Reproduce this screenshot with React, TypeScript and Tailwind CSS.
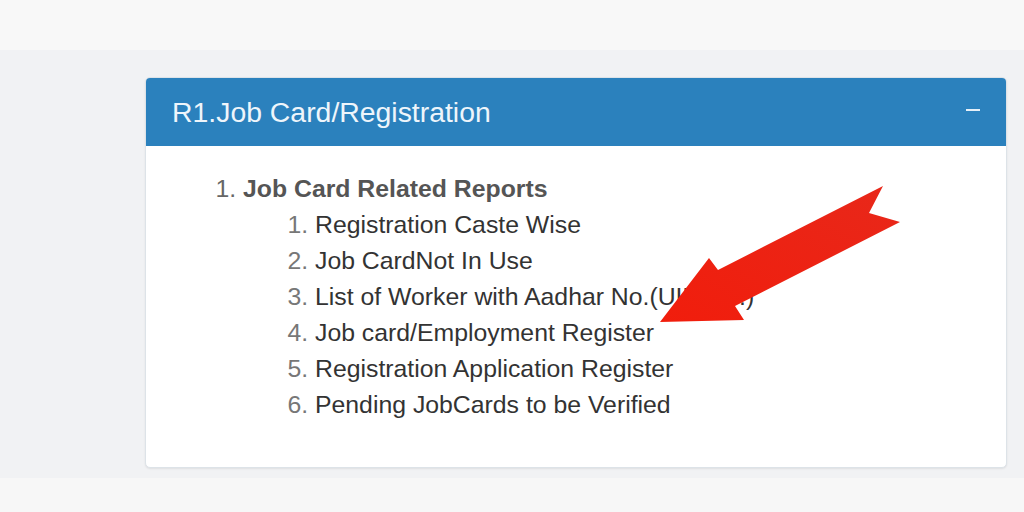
import React from 'react';

const items = [
  'Registration Caste Wise',
  'Job CardNot In Use',
  'List of Worker with Aadhar No.(UID No.)',
  'Job card/Employment Register',
  'Registration Application Register',
  'Pending JobCards to be Verified',
];

function Arrow() {
  return (
    <svg className="pointer-events-none absolute left-0 top-0" width="1024" height="512" viewBox="0 0 1024 512">
      <defs>
        <linearGradient id="arrowFill" x1="0" y1="1" x2="1" y2="0">
          <stop offset="0" stopColor="#f11d0c" />
          <stop offset="1" stopColor="#e8281a" />
        </linearGradient>
      </defs>
      <polygon
        points="660,322 709,258 718,270 883,186 869,213 900,222 735,306 744,320"
        fill="url(#arrowFill)"
      />
    </svg>
  );
}

export default function App() {
  return (
    <div className="relative flex h-[512px] w-[1024px] flex-col overflow-hidden bg-[#f1f2f4] font-['Liberation_Sans',Arial,sans-serif]">
      <div className="h-[50px] bg-[#f8f8f8]" />
      <div className="flex h-[428px] pl-[145px] pt-[27px]">
        <div className="flex h-[391px] w-[862px] flex-col overflow-hidden rounded-[5px] border border-[#dde3e8] bg-white shadow-[0_1px_2px_rgba(0,0,0,0.08)]">
          <div className="flex h-[68px] items-center justify-between bg-[#2b81bd] pl-[26px] pr-[26px]">
            <span className="text-[28.4px] text-[#eef5fb]">R1.Job Card/Registration</span>
            <span className="mb-[4px] h-[2px] w-[14px] bg-[#e6f0f8]" />
          </div>
          <div className="pl-[71px] pt-[25px]">
            <ol className="list-decimal text-[24.8px] leading-[36px] text-[#444] marker:text-[#666]">
              <li className="ml-[26px]">
                <span className="font-bold text-[#555]">Job Card Related Reports</span>
                <ol className="list-decimal pl-[72px] text-[#333] marker:text-[#777]">
                  {items.map(t => (
                    <li key={t} className="font-normal">{t}</li>
                  ))}
                </ol>
              </li>
            </ol>
          </div>
        </div>
      </div>
      <div className="flex-1 bg-[#f7f7f7]" />
      <Arrow />
    </div>
  );
}
